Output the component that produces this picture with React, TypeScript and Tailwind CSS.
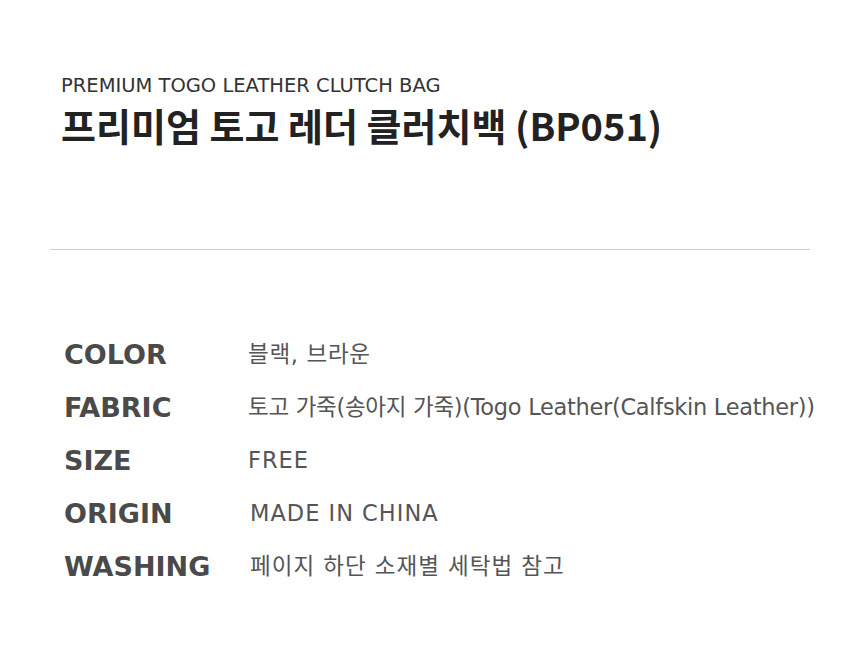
const rows: { label: string; value: string; extra: string }[] = [
  { label: "COLOR", value: "블랙, 브라운", extra: "pl-0 tracking-[0.7px]" },
  { label: "FABRIC", value: "토고 가죽(송아지 가죽)(Togo Leather(Calfskin Leather))", extra: "pl-0 tracking-[-0.3px]" },
  { label: "SIZE", value: "FREE", extra: "pl-0 tracking-[1px]" },
  { label: "ORIGIN", value: "MADE IN CHINA", extra: "pl-[2px] tracking-[1px]" },
  { label: "WASHING", value: "페이지 하단 소재별 세탁법 참고", extra: "pl-[2px] tracking-[1px]" },
];

export default function App() {
  return (
    <div className="h-[646px] w-[860px] bg-white font-['DejaVu_Sans','Noto_Sans_CJK_KR',sans-serif]">
      <div className="px-[61px] pt-[74px]">
        <div className="text-[19.5px] leading-[24px] text-[#333]">PREMIUM TOGO LEATHER CLUTCH BAG</div>
        <h1 className="mt-[4px] font-['Noto_Sans_CJK_KR',sans-serif] text-[38px] font-bold leading-[46px] text-[#222]">
          프리미엄 토고 레더 클러치백 (BP051)
        </h1>
      </div>
      <div className="mx-[50px] mt-[101px] h-px bg-[#cfcfcf]" />
      <div className="flex flex-col gap-[15px] px-[64px] pt-[86px]">
        {rows.map((r) => (
          <div key={r.label} className="flex h-[38px] items-center">
            <div className="w-[184px] shrink-0 text-[27px] font-bold text-[#4a4a4a]">{r.label}</div>
            <div className={`${r.extra} whitespace-nowrap text-[22.5px] text-[#555]`}>{r.value}</div>
          </div>
        ))}
      </div>
    </div>
  );
}
